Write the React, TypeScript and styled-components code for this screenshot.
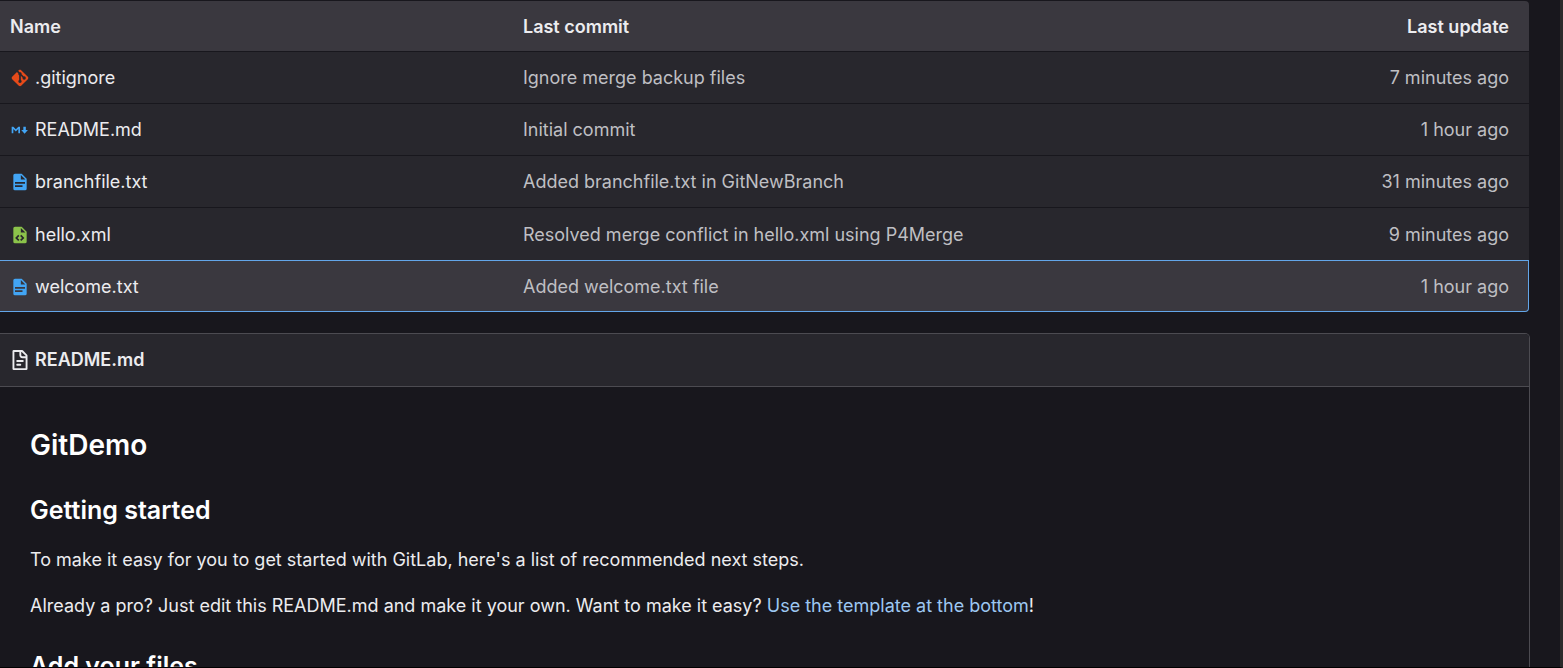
import React from 'react';
import styled, { createGlobalStyle } from 'styled-components';

const GlobalStyle = createGlobalStyle`
  *, *::before, *::after { box-sizing: border-box; }
  body {
    margin: 0;
    background: #18171d;
    color: #ececef;
    font-family: Inter, "Noto Sans", sans-serif;
    font-size: 18px;
    line-height: 26px;
  }
`;

const Page = styled.div`
  height: 100vh;
  overflow: hidden;
  border-right: 3px solid #2b2b2b;
  border-bottom: 1px solid #000;
  padding-right: 30px;
`;

const FileTable = styled.table`
  width: calc(100% - 1px);
  table-layout: fixed;
  border-collapse: separate;
  border-spacing: 0;
  border-top: 1px solid #18171d;
  border-radius: 0 5px 0 0;
`;

const HeadCell = styled.th<{ $width?: string; $end?: boolean }>`
  width: ${(p) => p.$width ?? 'auto'};
  height: 51px;
  padding: 2px 20px 0 10px;
  background: #3a383f;
  border-bottom: 1px solid #18171d;
  font-weight: 600;
  text-align: ${(p) => (p.$end ? 'right' : 'left')};

  &:last-child { border-top-right-radius: 4px; }
`;

const Cell = styled.td<{ $end?: boolean }>`
  height: 52px;
  padding: 1px 20px 0 10px;
  color: #bfbfc3;
  text-align: ${(p) => (p.$end ? 'right' : 'left')};
`;

const Row = styled.tr<{ $active?: boolean }>`
  & > td {
    background: ${(p) => (p.$active ? '#3a383f' : '#28272d')};
    border-bottom: 1px solid ${(p) => (p.$active ? '#63a6e9' : '#18171d')};
    border-top: ${(p) => (p.$active ? '1px solid #63a6e9' : '0')};
  }
  &:nth-last-child(2) > td { border-bottom: 0; }
  & > td:last-child {
    border-right: ${(p) => (p.$active ? '1px solid #63a6e9' : '0')};
    padding-right: ${(p) => (p.$active ? '19px' : '20px')};
  }
  &:last-child > td:last-child { border-bottom-right-radius: 4px; }
`;

const FileLink = styled.a`
  display: flex;
  align-items: center;
  gap: 5px;
  color: #ececef;
  text-decoration: none;
`;

const Icon = styled.svg`
  flex: none;
  width: 20px;
  height: 20px;
`;

const CommitLink = styled.a`
  color: inherit;
  text-decoration: none;
`;

const Panel = styled.section`
  margin-top: 21px;
  border: 1px solid #4c4b51;
  border-left: 0;
  border-radius: 0 5px 0 0;
`;

const PanelHeader = styled.header`
  display: flex;
  align-items: center;
  height: 53px;
  padding: 0 10px;
  background: #28272d;
  border-bottom: 1px solid #4c4b51;
  border-top-right-radius: 4px;
  font-weight: 600;
`;

const Prose = styled.article`
  padding: 40px 30px;
`;

const Title = styled.h1`
  margin: 0;
  font-size: 28px;
  line-height: 36px;
  font-weight: 600;
  color: #fff;
`;

const Heading = styled.h2`
  margin: 30px 0 20px;
  font-size: 25px;
  line-height: 34px;
  font-weight: 600;
  color: #fff;
`;

const Paragraph = styled.p`
  margin: 0 0 20px;
`;

const TextLink = styled.a`
  color: #9dc7f1;
  text-decoration: none;
`;

type Kind = 'git' | 'markdown' | 'text' | 'xml';

function FileIcon({ kind }: { kind: Kind }) {
  switch (kind) {
    case 'git':
      return (
        <Icon viewBox="0 0 24 24" aria-hidden="true">
          <path
            fill="#e64a19"
            d="M2.6 10.59 8.38 4.8l1.69 1.7c-.24.85.15 1.78.93 2.23v5.54c-.6.34-1 .99-1 1.73a2 2 0 0 0 2 2 2 2 0 0 0 2-2c0-.74-.4-1.39-1-1.73V9.41l2.07 2.09c-.07.15-.07.32-.07.5a2 2 0 0 0 2 2 2 2 0 0 0 2-2 2 2 0 0 0-2-2c-.18 0-.35 0-.5.07L13.93 7.5a1.98 1.98 0 0 0-1.15-2.34c-.43-.16-.88-.2-1.28-.09L9.8 3.38l.79-.78c.78-.79 2.04-.79 2.82 0l7.99 7.99c.79.78.79 2.04 0 2.82l-7.99 7.99c-.78.79-2.04.79-2.82 0L2.6 13.41c-.79-.78-.79-2.04 0-2.82Z"
          />
        </Icon>
      );
    case 'markdown':
      return (
        <Icon viewBox="0 0 24 24" aria-hidden="true">
          <path
            fill="#42a5f5"
            d="M2 16V8h2l3 3 3-3h2v8h-2v-5.2l-3 3-3-3V16H2m14-8h3v4h2.5l-4 4.5-4-4.5H16V8Z"
          />
        </Icon>
      );
    case 'text':
      return (
        <Icon viewBox="0 0 24 24" aria-hidden="true">
          <path
            fill="#42a5f5"
            d="M13 9h5.5L13 3.5V9M6 2h8l6 6v12a2 2 0 0 1-2 2H6a2 2 0 0 1-2-2V4c0-1.11.89-2 2-2m9 16v-2H6v2h9m3-4v-2H6v2h12Z"
          />
        </Icon>
      );
    case 'xml':
      return (
        <Icon viewBox="0 0 24 24" aria-hidden="true">
          <path
            fill="#8bc34a"
            d="M13 9h5.5L13 3.5V9M6 2h8l6 6v12a2 2 0 0 1-2 2H6a2 2 0 0 1-2-2V4c0-1.11.89-2 2-2m.12 13.5 3.74 3.74 1.42-1.41-2.33-2.33 2.33-2.33-1.42-1.41-3.74 3.74m11.16 0-3.74-3.74-1.42 1.41 2.33 2.33-2.33 2.33 1.42 1.41 3.74-3.74Z"
          />
        </Icon>
      );
  }
}

function DocumentIcon() {
  return (
    <Icon viewBox="0 0 16 16" aria-hidden="true">
      <path
        fill="#ececef"
        fillRule="evenodd"
        d="M3.5 1.5v13h9v-8H10A2.5 2.5 0 0 1 7.5 4V1.5h-4Zm5.5 0V4a1 1 0 0 0 1 1h2.5v-.38L9.38 1.5H9ZM2 1a1 1 0 0 1 1-1h6.59a1 1 0 0 1 .7.29l3.42 3.42a1 1 0 0 1 .29.7V15a1 1 0 0 1-1 1H3a1 1 0 0 1-1-1V1Zm3 7.75A.75.75 0 0 1 5.75 8h4.5a.75.75 0 0 1 0 1.5h-4.5A.75.75 0 0 1 5 8.75ZM5.75 11a.75.75 0 0 0 0 1.5h2.5a.75.75 0 0 0 0-1.5h-2.5Z"
      />
    </Icon>
  );
}

const files: { kind: Kind; name: string; commit: string; updated: string }[] = [
  { kind: 'git', name: '.gitignore', commit: 'Ignore merge backup files', updated: '7 minutes ago' },
  { kind: 'markdown', name: 'README.md', commit: 'Initial commit', updated: '1 hour ago' },
  { kind: 'text', name: 'branchfile.txt', commit: 'Added branchfile.txt in GitNewBranch', updated: '31 minutes ago' },
  { kind: 'xml', name: 'hello.xml', commit: 'Resolved merge conflict in hello.xml using P4Merge', updated: '9 minutes ago' },
  { kind: 'text', name: 'welcome.txt', commit: 'Added welcome.txt file', updated: '1 hour ago' },
];

export default function App() {
  return (
    <>
      <GlobalStyle />
      <Page>
        <FileTable>
          <thead>
            <tr>
              <HeadCell $width="33.55%">Name</HeadCell>
              <HeadCell>Last commit</HeadCell>
              <HeadCell $width="17%" $end>Last update</HeadCell>
            </tr>
          </thead>
          <tbody>
            {files.map((file) => (
              <Row key={file.name} $active={file.name === 'welcome.txt'}>
                <Cell>
                  <FileLink href="#">
                    <FileIcon kind={file.kind} />
                    {file.name}
                  </FileLink>
                </Cell>
                <Cell>
                  <CommitLink href="#">{file.commit}</CommitLink>
                </Cell>
                <Cell $end>
                  <time>{file.updated}</time>
                </Cell>
              </Row>
            ))}
          </tbody>
        </FileTable>
        <Panel>
          <PanelHeader>
            <FileLink href="#">
              <DocumentIcon />
              README.md
            </FileLink>
          </PanelHeader>
          <Prose>
            <Title>GitDemo</Title>
            <Heading>Getting started</Heading>
            <Paragraph>
              To make it easy for you to get started with GitLab, here's a list of recommended next steps.
            </Paragraph>
            <Paragraph>
              Already a pro? Just edit this README.md and make it your own. Want to make it easy?{' '}
              <TextLink href="#">Use the template at the bottom</TextLink>!
            </Paragraph>
            <Heading>Add your files</Heading>
          </Prose>
        </Panel>
      </Page>
    </>
  );
}
